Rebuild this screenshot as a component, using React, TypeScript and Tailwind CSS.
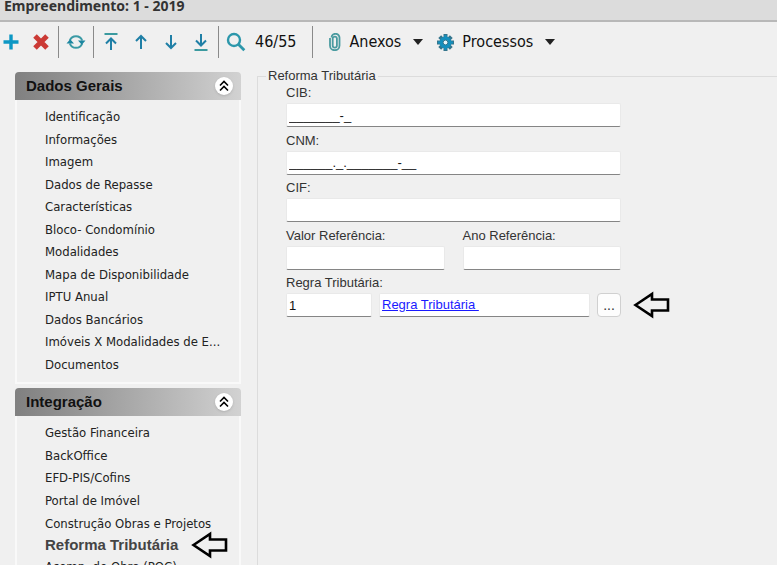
import { useState } from 'react';
import type { ReactNode } from 'react';

const gerais = [
  'Identificação',
  'Informações',
  'Imagem',
  'Dados de Repasse',
  'Características',
  'Bloco- Condomínio',
  'Modalidades',
  'Mapa de Disponibilidade',
  'IPTU Anual',
  'Dados Bancários',
  'Imóveis X Modalidades de E...',
  'Documentos',
];

const integracao = [
  'Gestão Financeira',
  'BackOffice',
  'EFD-PIS/Cofins',
  'Portal de Imóvel',
  'Construção Obras e Projetos',
  'Reforma Tributária',
  'Acomp. de Obra (POC)',
];

const selected = 'Reforma Tributária';

function ToolButton({ label, children }: { label: string; children: ReactNode }) {
  return (
    <button type="button" aria-label={label} title={label} className="flex w-[30px] shrink-0 items-center justify-center">
      <svg width="20" height="20" viewBox="0 0 20 20" fill="none" stroke="#1f7fa6" strokeWidth="2">
        {children}
      </svg>
    </button>
  );
}

function Separator() {
  return <span className="h-8 w-px shrink-0 bg-[#8a8a8a]" />;
}

function Caret() {
  return (
    <svg width="10" height="6" viewBox="0 0 10 6" fill="#222">
      <path d="M0 0h10L5 6z" />
    </svg>
  );
}

function PointerArrow() {
  return (
    <svg width="38" height="28" viewBox="0 0 38 28" fill="#f0f0f0" stroke="#000" strokeWidth="2.600">
      <path d="M2.500 14 19 3v5.500h16v11H19V25z" />
    </svg>
  );
}

function Toolbar() {
  return (
    <div className="flex h-10 items-center font-['DejaVu_Sans_Condensed','DejaVu_Sans',sans-serif] text-base text-[#111]">
      <div className="-ml-1 flex">
        <ToolButton label="Novo">
          <path d="M10 2.500v15M2.500 10h15" stroke="#0c97c4" strokeWidth="3.400" />
        </ToolButton>
        <ToolButton label="Excluir">
          <path d="m4 4 12 12M16 4 4 16" stroke="#cb3a35" strokeWidth="5" />
        </ToolButton>
      </div>
      <span className="w-0.5" />
      <Separator />
      <span className="w-0.5" />
      <ToolButton label="Atualizar">
        <path d="M3.800 8.500a6.600 6.600 0 0 1 12.400 0M16.200 11.500a6.600 6.600 0 0 1-12.400 0" stroke="#3b9aa5" />
        <path d="M12 8.500h7.500l-3.700 4.200zM.5 11.500H8L4.200 7.300z" fill="#1c86a0" stroke="none" />
      </ToolButton>
      <span className="w-0.5" />
      <Separator />
      <span className="w-0.5" />
      <ToolButton label="Primeiro">
        <path d="M3.500 2h13" stroke="#3b9a9f" />
        <path d="M10 18V6.500M5 11.500l5-5 5 5" />
      </ToolButton>
      <ToolButton label="Anterior">
        <path d="M10 17V4M5 9l5-5 5 5" />
      </ToolButton>
      <ToolButton label="Próximo">
        <path d="M10 3v13M5 11l5 5 5-5" />
      </ToolButton>
      <ToolButton label="Último">
        <path d="M3.500 18h13" stroke="#3b9a9f" />
        <path d="M10 2v11.500M5 8.500l5 5 5-5" />
      </ToolButton>
      <span className="w-0.5" />
      <Separator />
      <span className="w-0.5" />
      <ToolButton label="Pesquisar">
        <circle cx="8" cy="8" r="6" stroke="#2c97ab" strokeWidth="2.400" />
        <path d="m12.300 12.300 6 6" stroke="#2c97ab" strokeWidth="2.800" />
      </ToolButton>
      <span className="ml-1">46/55</span>
      <span className="w-4" />
      <Separator />
      <button type="button" className="ml-4 flex items-center whitespace-nowrap">
        <svg width="12" height="18" viewBox="0 0 12 18" fill="none" stroke="#4a9ba0" strokeWidth="1.800">
          <path d="M1 5v7.500a4.500 4.500 0 0 0 9.500 0V5a4 4 0 0 0-8-.5M3.700 5.500v7a2 2 0 0 0 4.200 0V6a2 2 0 0 0-4.200-.5" />
        </svg>
        <span className="mr-3 ml-2">Anexos</span>
        <Caret />
      </button>
      <button type="button" className="ml-3.5 flex items-center whitespace-nowrap">
        <svg width="17" height="17" viewBox="0 0 17 17">
          <path d="M8.500 0v17M0 8.500h17M2.700 2.700l11.600 11.600M14.300 2.700 2.700 14.300" stroke="#35758c" strokeWidth="4" />
          <circle cx="8.500" cy="8.500" r="6" fill="#158fbd" />
          <path d="M8.500 1v15M1 8.500h15" stroke="#158fbd" strokeWidth="2.200" />
          <circle cx="8.500" cy="8.500" r="2.400" fill="#e8f4f8" stroke="#35758c" />
        </svg>
        <span className="mr-3 ml-2">Processos</span>
        <Caret />
      </button>
    </div>
  );
}

function NavGroup({ title, items, listClass }: { title: string; items: string[]; listClass: string }) {
  const [open, setOpen] = useState(true);

  return (
    <section>
      <button
        type="button"
        aria-expanded={open}
        onClick={() => setOpen(!open)}
        className="flex h-7 w-full items-center justify-between rounded-t bg-linear-to-r from-[#808080] to-[#d2d2d2] pr-2 pl-[11px] text-left text-[15px] font-bold text-[#111]"
      >
        {title}
        <span className="flex size-[18px] items-center justify-center rounded-full bg-white shadow-sm">
          <svg width="10" height="12" viewBox="0 0 10 12" fill="none" stroke="#000" strokeWidth="1.600">
            <path d="m1 5.500 4-4 4 4M1 10.500l4-4 4 4" />
          </svg>
        </span>
      </button>
      {open && (
        <div className="border-2 border-t-0 border-[#f9f9f9] py-1.5">
          <ul className={`grid pl-7 font-['DejaVu_Sans_Condensed','DejaVu_Sans',sans-serif] text-[13px] leading-[22px] text-[#222] ${listClass}`}>
            {items.map((item) => (
              <li key={item} className="relative flex items-center whitespace-nowrap">
                {item === selected ? (
                  <>
                    <a href="#" aria-current="page" className="font-['Liberation_Sans',Arial,sans-serif] text-[15px] leading-5 font-bold text-[#444]">
                      {item}
                    </a>
                    <span className="absolute top-1/2 left-[146px] -translate-y-1/2">
                      <PointerArrow />
                    </span>
                  </>
                ) : (
                  <a href="#">{item}</a>
                )}
              </li>
            ))}
          </ul>
        </div>
      )}
    </section>
  );
}

const inputClass =
  'block h-6 w-full min-w-0 rounded-xs border border-[#e9e9e9] border-b-[#858585] bg-white px-0.5 text-[13px] text-[#111] outline-none';

const labelClass = 'mb-0.5 block text-[13px] leading-4 whitespace-nowrap';

function Field({ id, label, value = '' }: { id: string; label: string; value?: string }) {
  return (
    <div className="min-w-0 flex-1">
      <label htmlFor={id} className={labelClass}>
        {label}
      </label>
      <input id={id} type="text" defaultValue={value} className={inputClass} />
    </div>
  );
}

export default function App() {
  return (
    <div className="flex h-screen flex-col overflow-hidden bg-[#f0f0f0] font-['Liberation_Sans',Arial,sans-serif] text-[#333]">
      <header className="h-[22px] shrink-0 border-b-2 border-[#b8b8b8] bg-[#dcdcdc] pl-1">
        <h1 className="font-['Noto_Sans','Open_Sans',sans-serif] text-sm leading-3 font-bold text-[#333]">
          Empreendimento: 1 - 2019
        </h1>
      </header>
      <Toolbar />
      <div className="flex min-h-0 flex-1 pt-2.5 pl-[15px]">
        <nav className="flex w-[226px] shrink-0 flex-col gap-1">
          <NavGroup title="Dados Gerais" items={gerais} listClass="min-h-[270px]" />
          <NavGroup title="Integração" items={integracao} listClass="min-h-[156px]" />
        </nav>
        <main className="-mt-1 ml-4 min-w-0 flex-1">
          <fieldset className="h-full border border-r-0 border-b-0 border-[#dcdcdc] pl-7">
            <legend className="-ml-5 px-0.5 text-[13px] leading-4">Reforma Tributária</legend>
            <form className="grid min-h-[233px] max-w-[335px] content-between pt-px">
              <Field id="cib" label="CIB:" value="_______-_" />
              <Field id="cnm" label="CNM:" value="______._._______-__" />
              <Field id="cif" label="CIF:" />
              <div className="flex gap-[18px]">
                <Field id="valor" label="Valor Referência:" />
                <Field id="ano" label="Ano Referência:" />
              </div>
              <div>
                <label htmlFor="regra" className={labelClass}>
                  Regra Tributária:
                </label>
                <div className="flex items-center">
                  <div className="w-[86px] shrink-0">
                    <input id="regra" type="text" defaultValue="1" className={inputClass} />
                  </div>
                  <div className="ml-[7px] flex h-6 flex-1 items-center rounded-xs border border-[#e9e9e9] border-b-[#858585] bg-white px-0.5 text-[13px]">
                    <a href="#" className="whitespace-pre text-[#1a1aff] underline">
                      {'Regra Tributária '}
                    </a>
                  </div>
                  <button type="button" aria-label="Selecionar regra" className="ml-[7px] h-6 w-6 shrink-0 rounded border border-[#d0d0d0] bg-[#fdfdfd] text-sm leading-5">
                    ...
                  </button>
                  <span className="-my-0.5 -mr-[50px] ml-3 shrink-0">
                    <PointerArrow />
                  </span>
                </div>
              </div>
            </form>
          </fieldset>
        </main>
      </div>
    </div>
  );
}
